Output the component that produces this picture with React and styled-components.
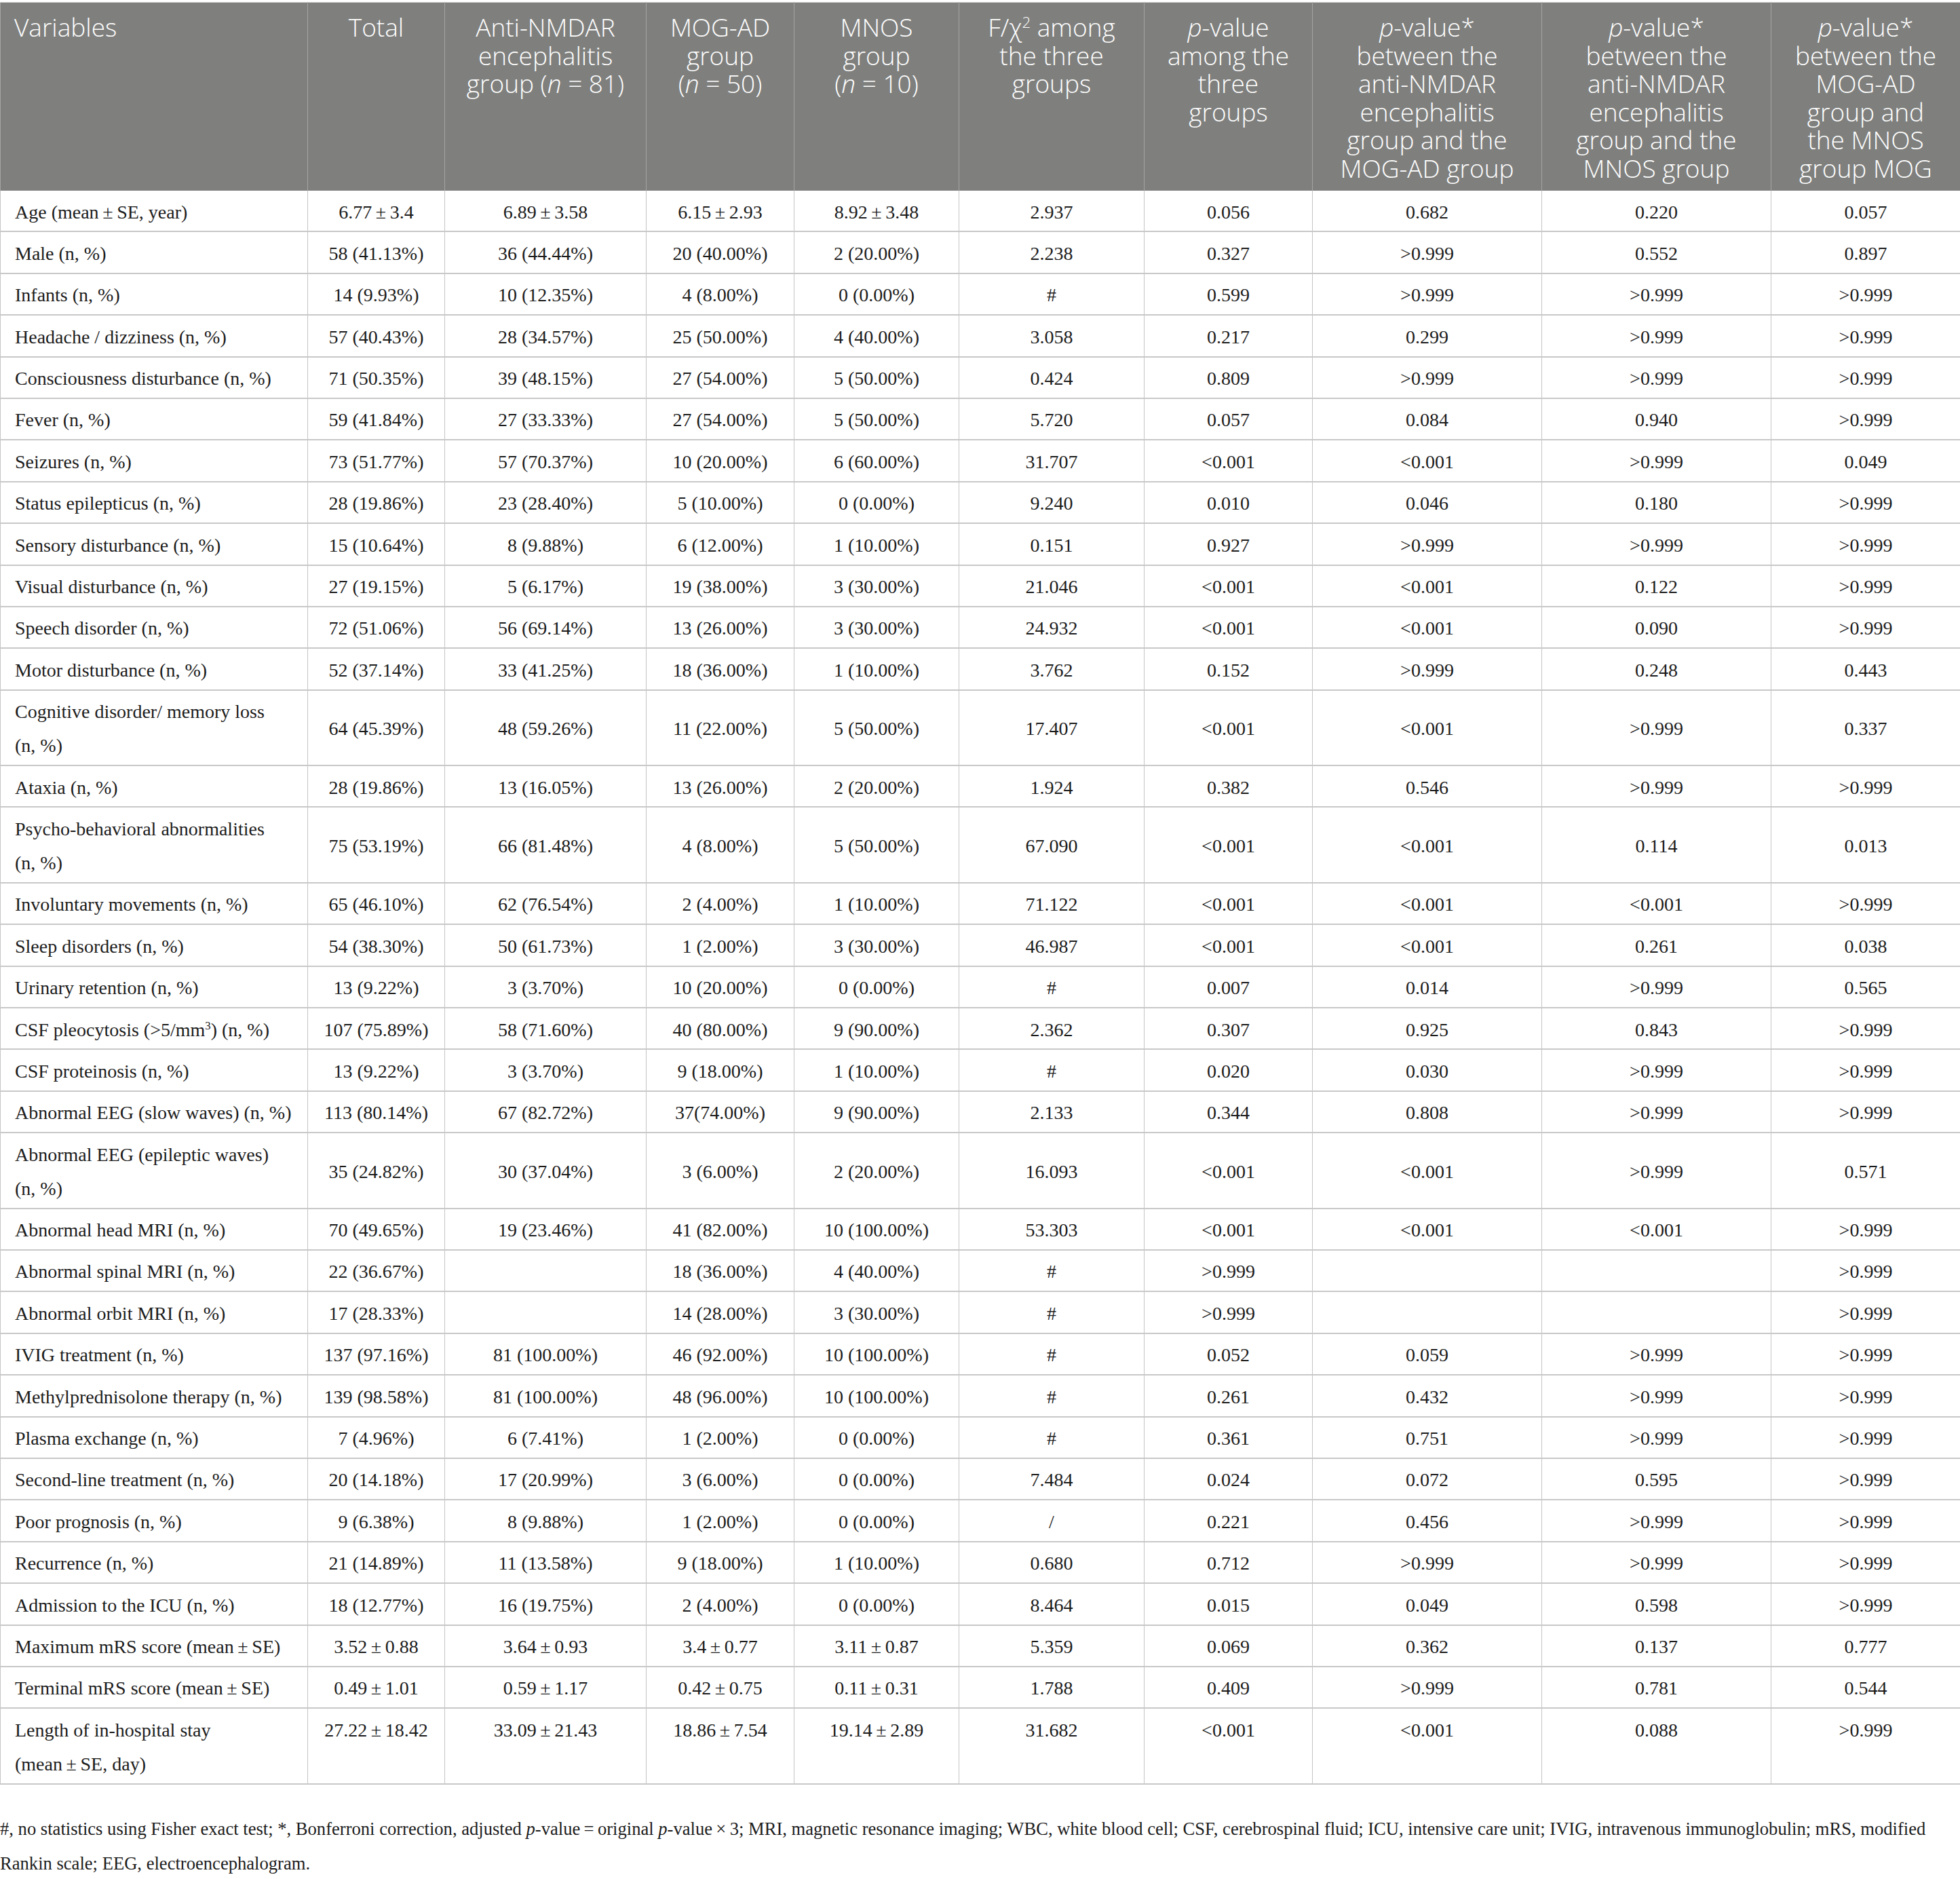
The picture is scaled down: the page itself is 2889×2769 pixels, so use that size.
import React from "react"
import styled, { createGlobalStyle } from "styled-components"

const GlobalStyle = createGlobalStyle`
  html, body {
    margin: 0;
    padding: 0;
    background: #ffffff;
  }
`

const Page = styled.div`
  width: 2889px;
  padding-top: 3px;
`

const Table = styled.table`
  width: 2889px;
  table-layout: fixed;
  border-collapse: collapse;
  font-family: "Liberation Serif", "Times New Roman", serif;
  font-size: 28px;
  color: #1c1c1c;
`

const HeadCell = styled.th`
  background: #7f807e;
  color: #ffffff;
  font-family: "Open Sans", "Liberation Sans", sans-serif;
  font-weight: 300;
  font-size: 37px;
  line-height: 41.5px;
  text-align: ${(p) => (p.$left ? "left" : "center")};
  vertical-align: top;
  padding: 15px 6px 13px ${(p) => (p.$left ? "20px" : "6px")};
  border-top: 1px solid #c8c8c8;
  border-left: 1px solid #a4a5a3;
  border-right: 1px solid #a4a5a3;
  white-space: nowrap;
`

const Cell = styled.td`
  padding: 6.5px 6px 2.9px;
  line-height: 50px;
  text-align: ${(p) => (p.$left ? "left" : "center")};
  padding-left: ${(p) => (p.$left ? "21px" : "6px")};
  vertical-align: ${(p) => (p.$top ? "top" : "middle")};
  border-left: 1px solid #c4c4c4;
  border-right: 1px solid #c4c4c4;
  border-bottom: 2px solid #c8c8c8;
  white-space: nowrap;
`

const Notes = styled.p`
  margin: 40px 0 0;
  font-family: "Liberation Serif", "Times New Roman", serif;
  font-size: 26.6px;
  line-height: 51px;
  color: #1c1c1c;
  white-space: nowrap;
`

const Sup = styled.sup`
  font-size: 0.6em;
  line-height: 0;
`

const widths = [453, 202, 297, 218, 243, 273, 248, 338, 338, 279]

const pm = (a, b) => `${a}\u2009±\u2009${b}`

const rows = [
  ["Age (mean\u2009±\u2009SE, year)", pm("6.77", "3.4"), pm("6.89", "3.58"), pm("6.15", "2.93"), pm("8.92", "3.48"), "2.937", "0.056", "0.682", "0.220", "0.057"],
  ["Male (n, %)", "58 (41.13%)", "36 (44.44%)", "20 (40.00%)", "2 (20.00%)", "2.238", "0.327", ">0.999", "0.552", "0.897"],
  ["Infants (n, %)", "14 (9.93%)", "10 (12.35%)", "4 (8.00%)", "0 (0.00%)", "#", "0.599", ">0.999", ">0.999", ">0.999"],
  ["Headache / dizziness (n, %)", "57 (40.43%)", "28 (34.57%)", "25 (50.00%)", "4 (40.00%)", "3.058", "0.217", "0.299", ">0.999", ">0.999"],
  ["Consciousness disturbance (n, %)", "71 (50.35%)", "39 (48.15%)", "27 (54.00%)", "5 (50.00%)", "0.424", "0.809", ">0.999", ">0.999", ">0.999"],
  ["Fever (n, %)", "59 (41.84%)", "27 (33.33%)", "27 (54.00%)", "5 (50.00%)", "5.720", "0.057", "0.084", "0.940", ">0.999"],
  ["Seizures (n, %)", "73 (51.77%)", "57 (70.37%)", "10 (20.00%)", "6 (60.00%)", "31.707", "<0.001", "<0.001", ">0.999", "0.049"],
  ["Status epilepticus (n, %)", "28 (19.86%)", "23 (28.40%)", "5 (10.00%)", "0 (0.00%)", "9.240", "0.010", "0.046", "0.180", ">0.999"],
  ["Sensory disturbance (n, %)", "15 (10.64%)", "8 (9.88%)", "6 (12.00%)", "1 (10.00%)", "0.151", "0.927", ">0.999", ">0.999", ">0.999"],
  ["Visual disturbance (n, %)", "27 (19.15%)", "5 (6.17%)", "19 (38.00%)", "3 (30.00%)", "21.046", "<0.001", "<0.001", "0.122", ">0.999"],
  ["Speech disorder (n, %)", "72 (51.06%)", "56 (69.14%)", "13 (26.00%)", "3 (30.00%)", "24.932", "<0.001", "<0.001", "0.090", ">0.999"],
  ["Motor disturbance (n, %)", "52 (37.14%)", "33 (41.25%)", "18 (36.00%)", "1 (10.00%)", "3.762", "0.152", ">0.999", "0.248", "0.443"],
  [<>Cognitive disorder/ memory loss<br />(n, %)</>, "64 (45.39%)", "48 (59.26%)", "11 (22.00%)", "5 (50.00%)", "17.407", "<0.001", "<0.001", ">0.999", "0.337"],
  ["Ataxia (n, %)", "28 (19.86%)", "13 (16.05%)", "13 (26.00%)", "2 (20.00%)", "1.924", "0.382", "0.546", ">0.999", ">0.999"],
  [<>Psycho-behavioral abnormalities<br />(n, %)</>, "75 (53.19%)", "66 (81.48%)", "4 (8.00%)", "5 (50.00%)", "67.090", "<0.001", "<0.001", "0.114", "0.013"],
  ["Involuntary movements (n, %)", "65 (46.10%)", "62 (76.54%)", "2 (4.00%)", "1 (10.00%)", "71.122", "<0.001", "<0.001", "<0.001", ">0.999"],
  ["Sleep disorders (n, %)", "54 (38.30%)", "50 (61.73%)", "1 (2.00%)", "3 (30.00%)", "46.987", "<0.001", "<0.001", "0.261", "0.038"],
  ["Urinary retention (n, %)", "13 (9.22%)", "3 (3.70%)", "10 (20.00%)", "0 (0.00%)", "#", "0.007", "0.014", ">0.999", "0.565"],
  [<>CSF pleocytosis (&gt;5/mm<Sup>3</Sup>) (n, %)</>, "107 (75.89%)", "58 (71.60%)", "40 (80.00%)", "9 (90.00%)", "2.362", "0.307", "0.925", "0.843", ">0.999"],
  ["CSF proteinosis (n, %)", "13 (9.22%)", "3 (3.70%)", "9 (18.00%)", "1 (10.00%)", "#", "0.020", "0.030", ">0.999", ">0.999"],
  ["Abnormal EEG (slow waves) (n, %)", "113 (80.14%)", "67 (82.72%)", "37(74.00%)", "9 (90.00%)", "2.133", "0.344", "0.808", ">0.999", ">0.999"],
  [<>Abnormal EEG (epileptic waves)<br />(n, %)</>, "35 (24.82%)", "30 (37.04%)", "3 (6.00%)", "2 (20.00%)", "16.093", "<0.001", "<0.001", ">0.999", "0.571"],
  ["Abnormal head MRI (n, %)", "70 (49.65%)", "19 (23.46%)", "41 (82.00%)", "10 (100.00%)", "53.303", "<0.001", "<0.001", "<0.001", ">0.999"],
  ["Abnormal spinal MRI (n, %)", "22 (36.67%)", "", "18 (36.00%)", "4 (40.00%)", "#", ">0.999", "", "", ">0.999"],
  ["Abnormal orbit MRI (n, %)", "17 (28.33%)", "", "14 (28.00%)", "3 (30.00%)", "#", ">0.999", "", "", ">0.999"],
  ["IVIG treatment (n, %)", "137 (97.16%)", "81 (100.00%)", "46 (92.00%)", "10 (100.00%)", "#", "0.052", "0.059", ">0.999", ">0.999"],
  ["Methylprednisolone therapy (n, %)", "139 (98.58%)", "81 (100.00%)", "48 (96.00%)", "10 (100.00%)", "#", "0.261", "0.432", ">0.999", ">0.999"],
  ["Plasma exchange (n, %)", "7 (4.96%)", "6 (7.41%)", "1 (2.00%)", "0 (0.00%)", "#", "0.361", "0.751", ">0.999", ">0.999"],
  ["Second-line treatment (n, %)", "20 (14.18%)", "17 (20.99%)", "3 (6.00%)", "0 (0.00%)", "7.484", "0.024", "0.072", "0.595", ">0.999"],
  ["Poor prognosis (n, %)", "9 (6.38%)", "8 (9.88%)", "1 (2.00%)", "0 (0.00%)", "/", "0.221", "0.456", ">0.999", ">0.999"],
  ["Recurrence (n, %)", "21 (14.89%)", "11 (13.58%)", "9 (18.00%)", "1 (10.00%)", "0.680", "0.712", ">0.999", ">0.999", ">0.999"],
  ["Admission to the ICU (n, %)", "18 (12.77%)", "16 (19.75%)", "2 (4.00%)", "0 (0.00%)", "8.464", "0.015", "0.049", "0.598", ">0.999"],
  ["Maximum mRS score (mean\u2009±\u2009SE)", pm("3.52", "0.88"), pm("3.64", "0.93"), pm("3.4", "0.77"), pm("3.11", "0.87"), "5.359", "0.069", "0.362", "0.137", "0.777"],
  ["Terminal mRS score (mean\u2009±\u2009SE)", pm("0.49", "1.01"), pm("0.59", "1.17"), pm("0.42", "0.75"), pm("0.11", "0.31"), "1.788", "0.409", ">0.999", "0.781", "0.544"],
  [<>Length of in-hospital stay<br />(mean{"\u2009±\u2009"}SE, day)</>, pm("27.22", "18.42"), pm("33.09", "21.43"), pm("18.86", "7.54"), pm("19.14", "2.89"), "31.682", "<0.001", "<0.001", "0.088", ">0.999"],
]

const P = () => <i>p</i>
const N = () => <i>n</i>

const headers = [
  "Variables",
  "Total",
  <>Anti-NMDAR<br />encephalitis<br />group (<N /> = 81)</>,
  <>MOG-AD<br />group<br />(<N /> = 50)</>,
  <>MNOS<br />group<br />(<N /> = 10)</>,
  <>F/χ<Sup>2</Sup> among<br />the three<br />groups</>,
  <><P />-value<br />among the<br />three<br />groups</>,
  <><P />-value*<br />between the<br />anti-NMDAR<br />encephalitis<br />group and the<br />MOG-AD group</>,
  <><P />-value*<br />between the<br />anti-NMDAR<br />encephalitis<br />group and the<br />MNOS group</>,
  <><P />-value*<br />between the<br />MOG-AD<br />group and<br />the MNOS<br />group MOG</>,
]

const App = () => {
  return (
    <Page>
      <GlobalStyle />
      <Table>
        <colgroup>
          {widths.map((w, i) => (
            <col key={i} style={{ width: w }} />
          ))}
        </colgroup>
        <thead>
          <tr>
            {headers.map((h, i) => (
              <HeadCell key={i} $left={i === 0}>
                {h}
              </HeadCell>
            ))}
          </tr>
        </thead>
        <tbody>
          {rows.map((r, ri) => {
            const last = ri === rows.length - 1
            return (
              <tr key={ri}>
                {r.map((v, ci) => (
                  <Cell key={ci} $left={ci === 0} $top={last}>
                    {v}
                  </Cell>
                ))}
              </tr>
            )
          })}
        </tbody>
      </Table>
      <Notes>
        #, no statistics using Fisher exact test; *, Bonferroni correction, adjusted <i>p</i>-value{"\u2009=\u2009"}original <i>p</i>-value{"\u2009×\u2009"}3; MRI, magnetic resonance imaging; WBC, white blood cell; CSF, cerebrospinal fluid; ICU, intensive care unit; IVIG, intravenous immunoglobulin; mRS, modified
        <br />
        Rankin scale; EEG, electroencephalogram.
      </Notes>
    </Page>
  )
}

export default App
